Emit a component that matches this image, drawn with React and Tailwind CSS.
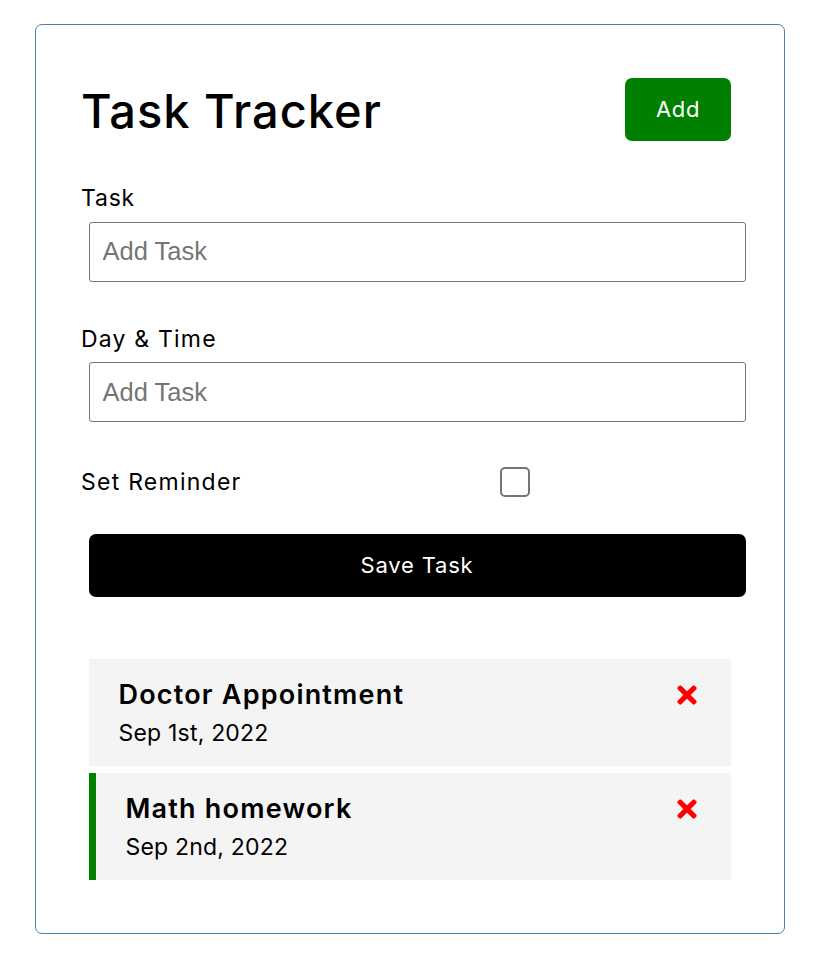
import { useState } from "react";

const FONT = { fontFamily: "'Inter', 'Noto Sans', sans-serif" };

const TimesIcon = () => (
  <svg viewBox="0 0 352 512" className="w-[20px] h-[28px] shrink-0" fill="#ff0000">
    <path d="M242.72 256l100.07-100.07c12.28-12.28 12.28-32.19 0-44.48l-22.240-22.24c-12.28-12.28-32.19-12.28-44.48 0L176 189.28 75.93 89.21c-12.28-12.28-32.19-12.28-44.48 0L9.21 111.45c-12.28 12.28-12.28 32.19 0 44.48L109.28 256 9.21 356.07c-12.28 12.28-12.28 32.19 0 44.48l22.24 22.24c12.28 12.28 32.2 12.28 44.48 0L176 322.72l100.07 100.07c12.28 12.28 32.2 12.28 44.480 0l22.24-22.24c12.28-12.28 12.28-32.19 0-44.48L242.72 256z" />
  </svg>
);

const tasks = [
  { id: 1, text: "Doctor Appointment", day: "Sep 1st, 2022", reminder: false },
  { id: 2, text: "Math homework", day: "Sep 2nd, 2022", reminder: true },
];

export default function App() {
  const [reminder, setReminder] = useState(false);

  return (
    <div className="bg-white min-h-[979px] pt-[24px]" style={FONT}>
      <div className="ml-[35px] w-[750px] border border-[#4682b4] rounded-[7px] p-[45px] text-black">

        {/* Header */}
        <div className="flex items-center justify-between h-[78px]">
          <h1 className="text-[47px] font-medium leading-none tracking-[1px] pt-[2px]">Task Tracker</h1>
          <button className="mr-[8px] w-[106px] h-[63px] rounded-[7px] bg-[#008000] text-white text-[22px] tracking-[0.6px]">
            Add
          </button>
        </div>

        {/* Form */}
        <div className="mt-[30px]">
          <div>
            <label className="block text-[23px] leading-[36px] pt-[2px] h-[36px] tracking-[0.8px]">Task</label>
            <input
              className="block mx-[7.5px] mt-[7.5px] w-[657px] h-[60px] border border-[#767676] rounded-[3px] px-[13px] text-[25.5px] placeholder:text-[#757575] outline-none"
              style={{ fontFamily: "'Liberation Sans', Arial, sans-serif" }}
              placeholder="Add Task"
            />
          </div>
          <div className="mt-[37px]">
            <label className="block text-[23px] leading-[36px] pt-[2px] h-[36px] tracking-[1.2px]">Day &amp; Time</label>
            <input
              className="block mx-[7.5px] mt-[7.5px] w-[657px] h-[60px] border border-[#767676] rounded-[3px] px-[13px] text-[25.5px] placeholder:text-[#757575] outline-none"
              style={{ fontFamily: "'Liberation Sans', Arial, sans-serif" }}
              placeholder="Add Task"
            />
          </div>
          <div className="mt-[37px] flex items-center h-[45px]">
            <label className="w-[419px] text-[23px] tracking-[1.25px] pt-[2px]">Set Reminder</label>
            <button
              onClick={() => setReminder(!reminder)}
              className="w-[30px] h-[30px] border-2 border-[#767676] rounded-[5px] bg-white"
              aria-label="Set Reminder"
            />
          </div>
          <button className="block mt-[30px] mx-[7.5px] w-[657px] h-[63px] rounded-[7px] bg-black text-white text-[22px] tracking-[0.8px]">
            Save Task
          </button>
        </div>

        {/* Tasks */}
        <div className="mt-[62px] flex flex-col gap-[7px] mb-[8px]">
          {tasks.map((t) => (
            <div
              key={t.id}
              className={`mx-[7.5px] w-[642px] bg-[#f4f4f4] px-[30px] pt-[15px] pb-[15px] ${t.reminder ? "border-l-[7.5px] border-[#008000]" : ""}`}
            >
              <h3 className="flex items-center justify-between text-[27px] font-semibold leading-[41px] tracking-[1.2px]">
                {t.text}
                <span className="mr-[4px]"><TimesIcon /></span>
              </h3>
              <p className="text-[23px] leading-[36px] tracking-[0.2px]">{t.day}</p>
            </div>
          ))}
        </div>
      </div>
    </div>
  );
}
